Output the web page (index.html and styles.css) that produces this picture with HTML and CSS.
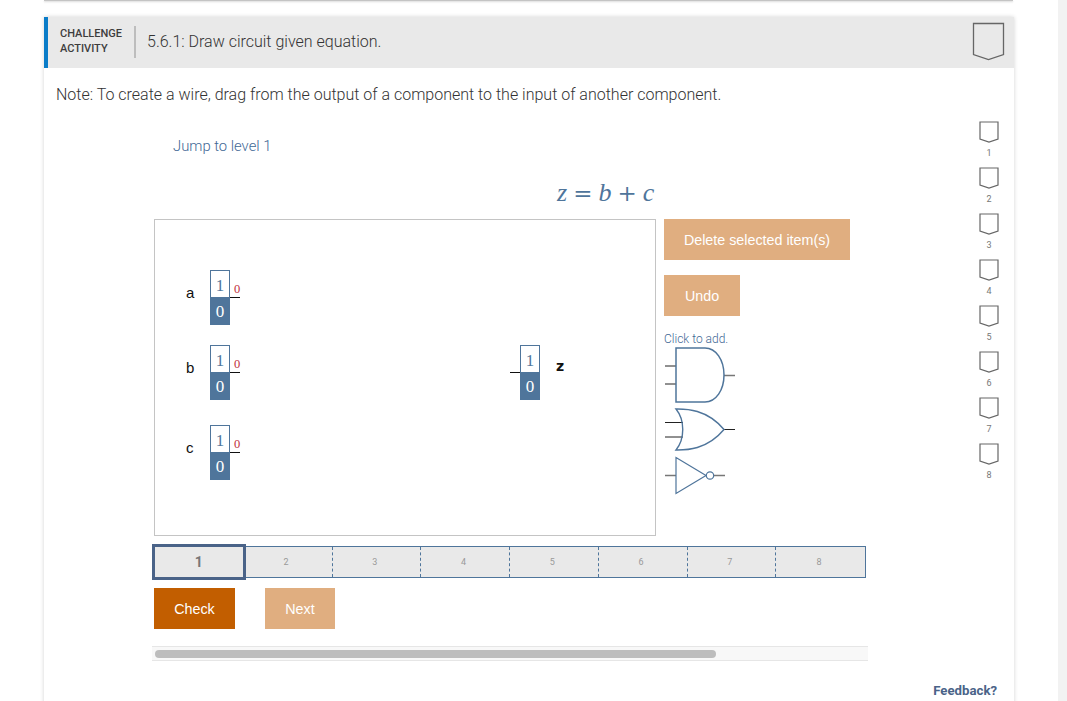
FILE: index.html
```html
<!DOCTYPE html>
<html lang="en">
<head>
    <meta charset="UTF-8">
    <meta name="viewport" content="width=device-width, initial-scale=1.0">
    <title>Challenge Activity 5.6.1</title>
    <link rel="stylesheet" href="styles.css">
</head>
<body>
    <div class="page">
        <div class="top-rule"></div>

        <div class="card">
            <div class="card-head">
                <div class="activity-type">CHALLENGE<br>ACTIVITY</div>
                <div class="activity-title">5.6.1: Draw circuit given equation.</div>
                <svg class="head-mark" width="33" height="39" viewBox="0 0 33 39">
                    <path d="M1.5 1.5H31.5V32.5L16.5 37.5L1.5 32.5Z" fill="none" stroke="#666" stroke-width="1.3"/>
                </svg>
            </div>

            <div class="card-body">
                <div class="activity">
                    <p class="note">Note: To create a wire, drag from the output of a component to the input of another component.</p>

                    <div class="player">
                        <a class="jump-link">Jump to level 1</a>
                        <div class="equation"><i>z</i><span class="eq-op">=</span><i>b</i><span class="eq-op">+</span><i>c</i></div>

                        <div class="workspace">
                            <div class="canvas">
                                <div class="node node-a">
                                    <span class="node-name">a</span>
                                    <div class="pin"><span class="pin-high">1</span><span class="pin-low">0</span></div>
                                    <span class="pin-value">0</span>
                                    <span class="wire wire-out"></span>
                                </div>
                                <div class="node node-b">
                                    <span class="node-name">b</span>
                                    <div class="pin"><span class="pin-high">1</span><span class="pin-low">0</span></div>
                                    <span class="pin-value">0</span>
                                    <span class="wire wire-out"></span>
                                </div>
                                <div class="node node-c">
                                    <span class="node-name">c</span>
                                    <div class="pin"><span class="pin-high">1</span><span class="pin-low">0</span></div>
                                    <span class="pin-value">0</span>
                                    <span class="wire wire-out"></span>
                                </div>
                                <div class="node node-z">
                                    <span class="wire wire-in"></span>
                                    <div class="pin"><span class="pin-high">1</span><span class="pin-low">0</span></div>
                                    <span class="node-name output-name">z</span>
                                </div>
                            </div>

                            <div class="tools">
                                <button class="btn btn-light btn-delete">Delete selected item(s)</button>
                                <button class="btn btn-light btn-undo">Undo</button>
                                <div class="add-hint">Click to add.</div>
                                <svg class="gates" width="72" height="148" viewBox="0 0 72 148">
                                    <path d="M1 19H12M1 37H12" stroke="#222" stroke-width="1" fill="none"/>
                                    <path d="M60 28.5H71" stroke="#777" stroke-width="1.5" fill="none"/>
                                    <path d="M12 1H41C52 1 60 13 60 28C60 43 52 55 41 55H12Z" fill="#fff" stroke="#4f759b" stroke-width="1.5"/>

                                    <path d="M1 75.5H19M1 90H19" stroke="#222" stroke-width="1" fill="none"/>
                                    <path d="M60 82.5H71" stroke="#222" stroke-width="1" fill="none"/>
                                    <path d="M12 62C20 62 42 61 60 82.5C42 104 20 103 12 103C21 92 21 73 12 62Z" fill="none" stroke="#4f759b" stroke-width="1.4"/>

                                    <path d="M1 128.5H12" stroke="#777" stroke-width="1.5" fill="none"/>
                                    <path d="M50 128.5H61" stroke="#777" stroke-width="1.5" fill="none"/>
                                    <path d="M12 110.5L42 128.5L12 146.5Z" fill="#fff" stroke="#4f759b" stroke-width="1.2"/>
                                    <circle cx="46" cy="128.5" r="3.7" fill="#fff" stroke="#4f759b" stroke-width="1.2"/>
                                </svg>
                            </div>
                        </div>

                        <div class="level-bar">
                            <div class="level-cell level-current">1</div>
                            <div class="level-cell">2</div>
                            <div class="level-cell">3</div>
                            <div class="level-cell">4</div>
                            <div class="level-cell">5</div>
                            <div class="level-cell">6</div>
                            <div class="level-cell">7</div>
                            <div class="level-cell">8</div>
                        </div>

                        <div class="actions">
                            <button class="btn btn-check">Check</button>
                            <button class="btn btn-light btn-next">Next</button>
                        </div>

                        <div class="scroll-track"><div class="scroll-thumb"></div></div>
                    </div>
                </div>

                <div class="side">
                    <div class="level-marks">
                        <div class="level-mark"><svg width="20" height="22" viewBox="0 0 20 22"><path d="M1 1H19V18L10 21L1 18Z" fill="none" stroke="#666" stroke-width="1.2"/></svg><span>1</span></div>
                        <div class="level-mark"><svg width="20" height="22" viewBox="0 0 20 22"><path d="M1 1H19V18L10 21L1 18Z" fill="none" stroke="#666" stroke-width="1.2"/></svg><span>2</span></div>
                        <div class="level-mark"><svg width="20" height="22" viewBox="0 0 20 22"><path d="M1 1H19V18L10 21L1 18Z" fill="none" stroke="#666" stroke-width="1.2"/></svg><span>3</span></div>
                        <div class="level-mark"><svg width="20" height="22" viewBox="0 0 20 22"><path d="M1 1H19V18L10 21L1 18Z" fill="none" stroke="#666" stroke-width="1.2"/></svg><span>4</span></div>
                        <div class="level-mark"><svg width="20" height="22" viewBox="0 0 20 22"><path d="M1 1H19V18L10 21L1 18Z" fill="none" stroke="#666" stroke-width="1.2"/></svg><span>5</span></div>
                        <div class="level-mark"><svg width="20" height="22" viewBox="0 0 20 22"><path d="M1 1H19V18L10 21L1 18Z" fill="none" stroke="#666" stroke-width="1.2"/></svg><span>6</span></div>
                        <div class="level-mark"><svg width="20" height="22" viewBox="0 0 20 22"><path d="M1 1H19V18L10 21L1 18Z" fill="none" stroke="#666" stroke-width="1.2"/></svg><span>7</span></div>
                        <div class="level-mark"><svg width="20" height="22" viewBox="0 0 20 22"><path d="M1 1H19V18L10 21L1 18Z" fill="none" stroke="#666" stroke-width="1.2"/></svg><span>8</span></div>
                    </div>
                    <a class="feedback">Feedback?</a>
                </div>
            </div>
        </div>
    </div>
</body>
</html>
```

FILE: styles.css
```css
html, body {
    margin: 0;
    height: 100%;
    overflow: hidden;
}

body {
    font-family: Roboto, Arial, sans-serif;
    background-color: white;
    color: #444;
}

.page {
    height: 701px;
    border-right: 9px solid #f2f2f2;
    box-sizing: border-box;
    overflow: hidden;
}

.top-rule {
    width: 969px;
    height: 1px;
    margin-left: 44px;
    background: #c4c4c4;
    box-shadow: 0 1px 2px rgba(0, 0, 0, 0.2);
}

.card {
    width: 970px;
    height: 700px;
    margin: 16px 0 0 44px;
    background: white;
    box-shadow: 0 0 4px rgba(0, 0, 0, 0.18);
}

.card-head {
    display: flex;
    align-items: center;
    height: 51px;
    background: #e9e9e9;
    border-left: 4px solid #0a7cc8;
    box-sizing: border-box;
    padding-left: 12px;
}

.activity-type {
    width: 74px;
    margin-bottom: 4px;
    font-size: 11px;
    font-weight: 500;
    line-height: 15px;
    color: #3d3d3d;
}

.activity-title {
    flex: 1;
    height: 32px;
    margin-bottom: 1px;
    line-height: 32px;
    border-left: 2px solid #bdbdbd;
    padding-left: 11px;
    font-size: 16px;
    font-weight: 300;
    color: #333;
}

.head-mark {
    margin: 0 9px 3px 0;
}

.card-body {
    display: flex;
}

.activity {
    flex: 1;
    padding-left: 12px;
}

.note {
    margin: 17px 0 0;
    font-size: 16px;
    font-weight: 300;
    line-height: 20px;
    color: #333;
}

.player {
    margin-left: 98px;
    width: 712px;
}

.jump-link {
    display: block;
    margin: 31px 0 0 19px;
    font-size: 14.8px;
    font-weight: 300;
    line-height: 20px;
    color: #3f6895;
}

.equation {
    height: 28px;
    margin: 23px 0 0 403px;
    font-family: "Liberation Serif", serif;
    font-size: 26px;
    line-height: 28px;
    white-space: nowrap;
    color: #4f759b;
}

.eq-op {
    margin: 0 6px;
    font-family: "DejaVu Serif", serif;
    font-size: 23px;
    font-weight: 300;
}

.workspace {
    display: flex;
    gap: 8px;
    margin-top: 12px;
}

.canvas {
    position: relative;
    width: 502px;
    height: 317px;
    box-sizing: border-box;
    border: 1px solid #c4c4c4;
}

/* circuit nodes sit freely on the canvas */
.node {
    position: absolute;
    width: 90px;
    height: 55px;
}

.node-a { left: 55px; top: 50px; }
.node-b { left: 55px; top: 125px; }
.node-c { left: 55px; top: 205px; }
.node-z { left: 365px; top: 125px; }

.pin {
    position: absolute;
    left: 0;
    top: 0;
    display: flex;
    flex-direction: column;
    width: 20px;
    height: 55px;
    font-family: "Liberation Serif", serif;
    font-size: 17px;
    text-align: center;
}

.pin-high {
    height: 27px;
    line-height: 30px;
    box-sizing: border-box;
    border: 1px solid #4f759b;
    border-bottom: none;
    background: white;
    color: #4f759b;
}

.pin-low {
    height: 28px;
    line-height: 30px;
    background: #4f759b;
    color: white;
}

.node-name {
    position: absolute;
    left: -24px;
    top: 14px;
    font-family: "Liberation Sans", Arial, sans-serif;
    font-size: 15px;
    color: #111;
}

.node-z .output-name {
    left: 36px;
    top: 13px;
    font-family: "DejaVu Sans", sans-serif;
    font-weight: bold;
    font-size: 14px;
}

.pin-value {
    position: absolute;
    left: 24px;
    top: 12px;
    font-family: "Liberation Serif", serif;
    font-size: 12.5px;
    color: #c0303c;
}

.wire {
    position: absolute;
    top: 27px;
    width: 10px;
    height: 1px;
    background: #111;
}

.wire-out { left: 20px; }
.wire-in { left: -10px; }

.tools {
    display: flex;
    flex-direction: column;
    align-items: flex-start;
}

.btn {
    height: 41px;
    padding: 0;
    border: none;
    font-family: "Liberation Sans", Arial, sans-serif;
    font-size: 14.3px;
    color: white;
}

.btn-light {
    background-color: #e0ae80;
}

.btn-delete {
    width: 186px;
}

.btn-undo {
    width: 76px;
    margin-top: 15px;
}

.add-hint {
    margin-top: 15px;
    font-size: 12px;
    font-weight: 300;
    line-height: 16px;
    color: #3f6895;
}

.gates {
    margin: 0;
}

.level-bar {
    display: grid;
    grid-template-columns: repeat(8, 1fr);
    height: 32px;
    margin-top: 10px;
    box-sizing: border-box;
    border: 1px solid #4f759b;
    background: #e9e9e9;
}

.level-cell {
    display: flex;
    align-items: center;
    justify-content: center;
    padding-right: 3px;
    border-right: 1px dashed #4f759b;
    font-size: 9px;
    color: #999;
}

.level-cell:last-child {
    border-right: none;
}

.level-current {
    margin: -3px -2px -3px -3px;
    padding-right: 0;
    border: 3px solid #4a6388;
    background: #e9e9e9;
    font-size: 14px;
    font-weight: bold;
    color: #777;
    z-index: 1;
}

.actions {
    display: flex;
    gap: 30px;
    margin-top: 10px;
}

.btn-check {
    width: 81px;
    background-color: #c25e00;
}

.btn-next {
    width: 70px;
}

.scroll-track {
    width: 716px;
    height: 15px;
    margin: 17px 0 0 -2px;
    box-sizing: border-box;
    padding: 3px;
    background: #f8f8f8;
    border-top: 1px solid #e6e6e6;
    border-bottom: 1px solid #e6e6e6;
}

.scroll-thumb {
    width: 561px;
    height: 8px;
    border-radius: 4px;
    background: #bdbdbd;
}

.side {
    display: flex;
    flex-direction: column;
    align-items: flex-end;
    width: 84px;
    padding-right: 17px;
    box-sizing: border-box;
}

.level-marks {
    display: flex;
    flex-direction: column;
    width: 20px;
    margin: 53px -2px 0 0;
}

.level-mark {
    display: flex;
    flex-direction: column;
    align-items: center;
    height: 46px;
    font-size: 9px;
    line-height: 20px;
    color: #777;
}

.level-mark svg {
    display: block;
}

.feedback {
    margin-top: 194px;
    font-size: 13.2px;
    font-weight: bold;
    line-height: 16px;
    color: #4a6388;
}
```
